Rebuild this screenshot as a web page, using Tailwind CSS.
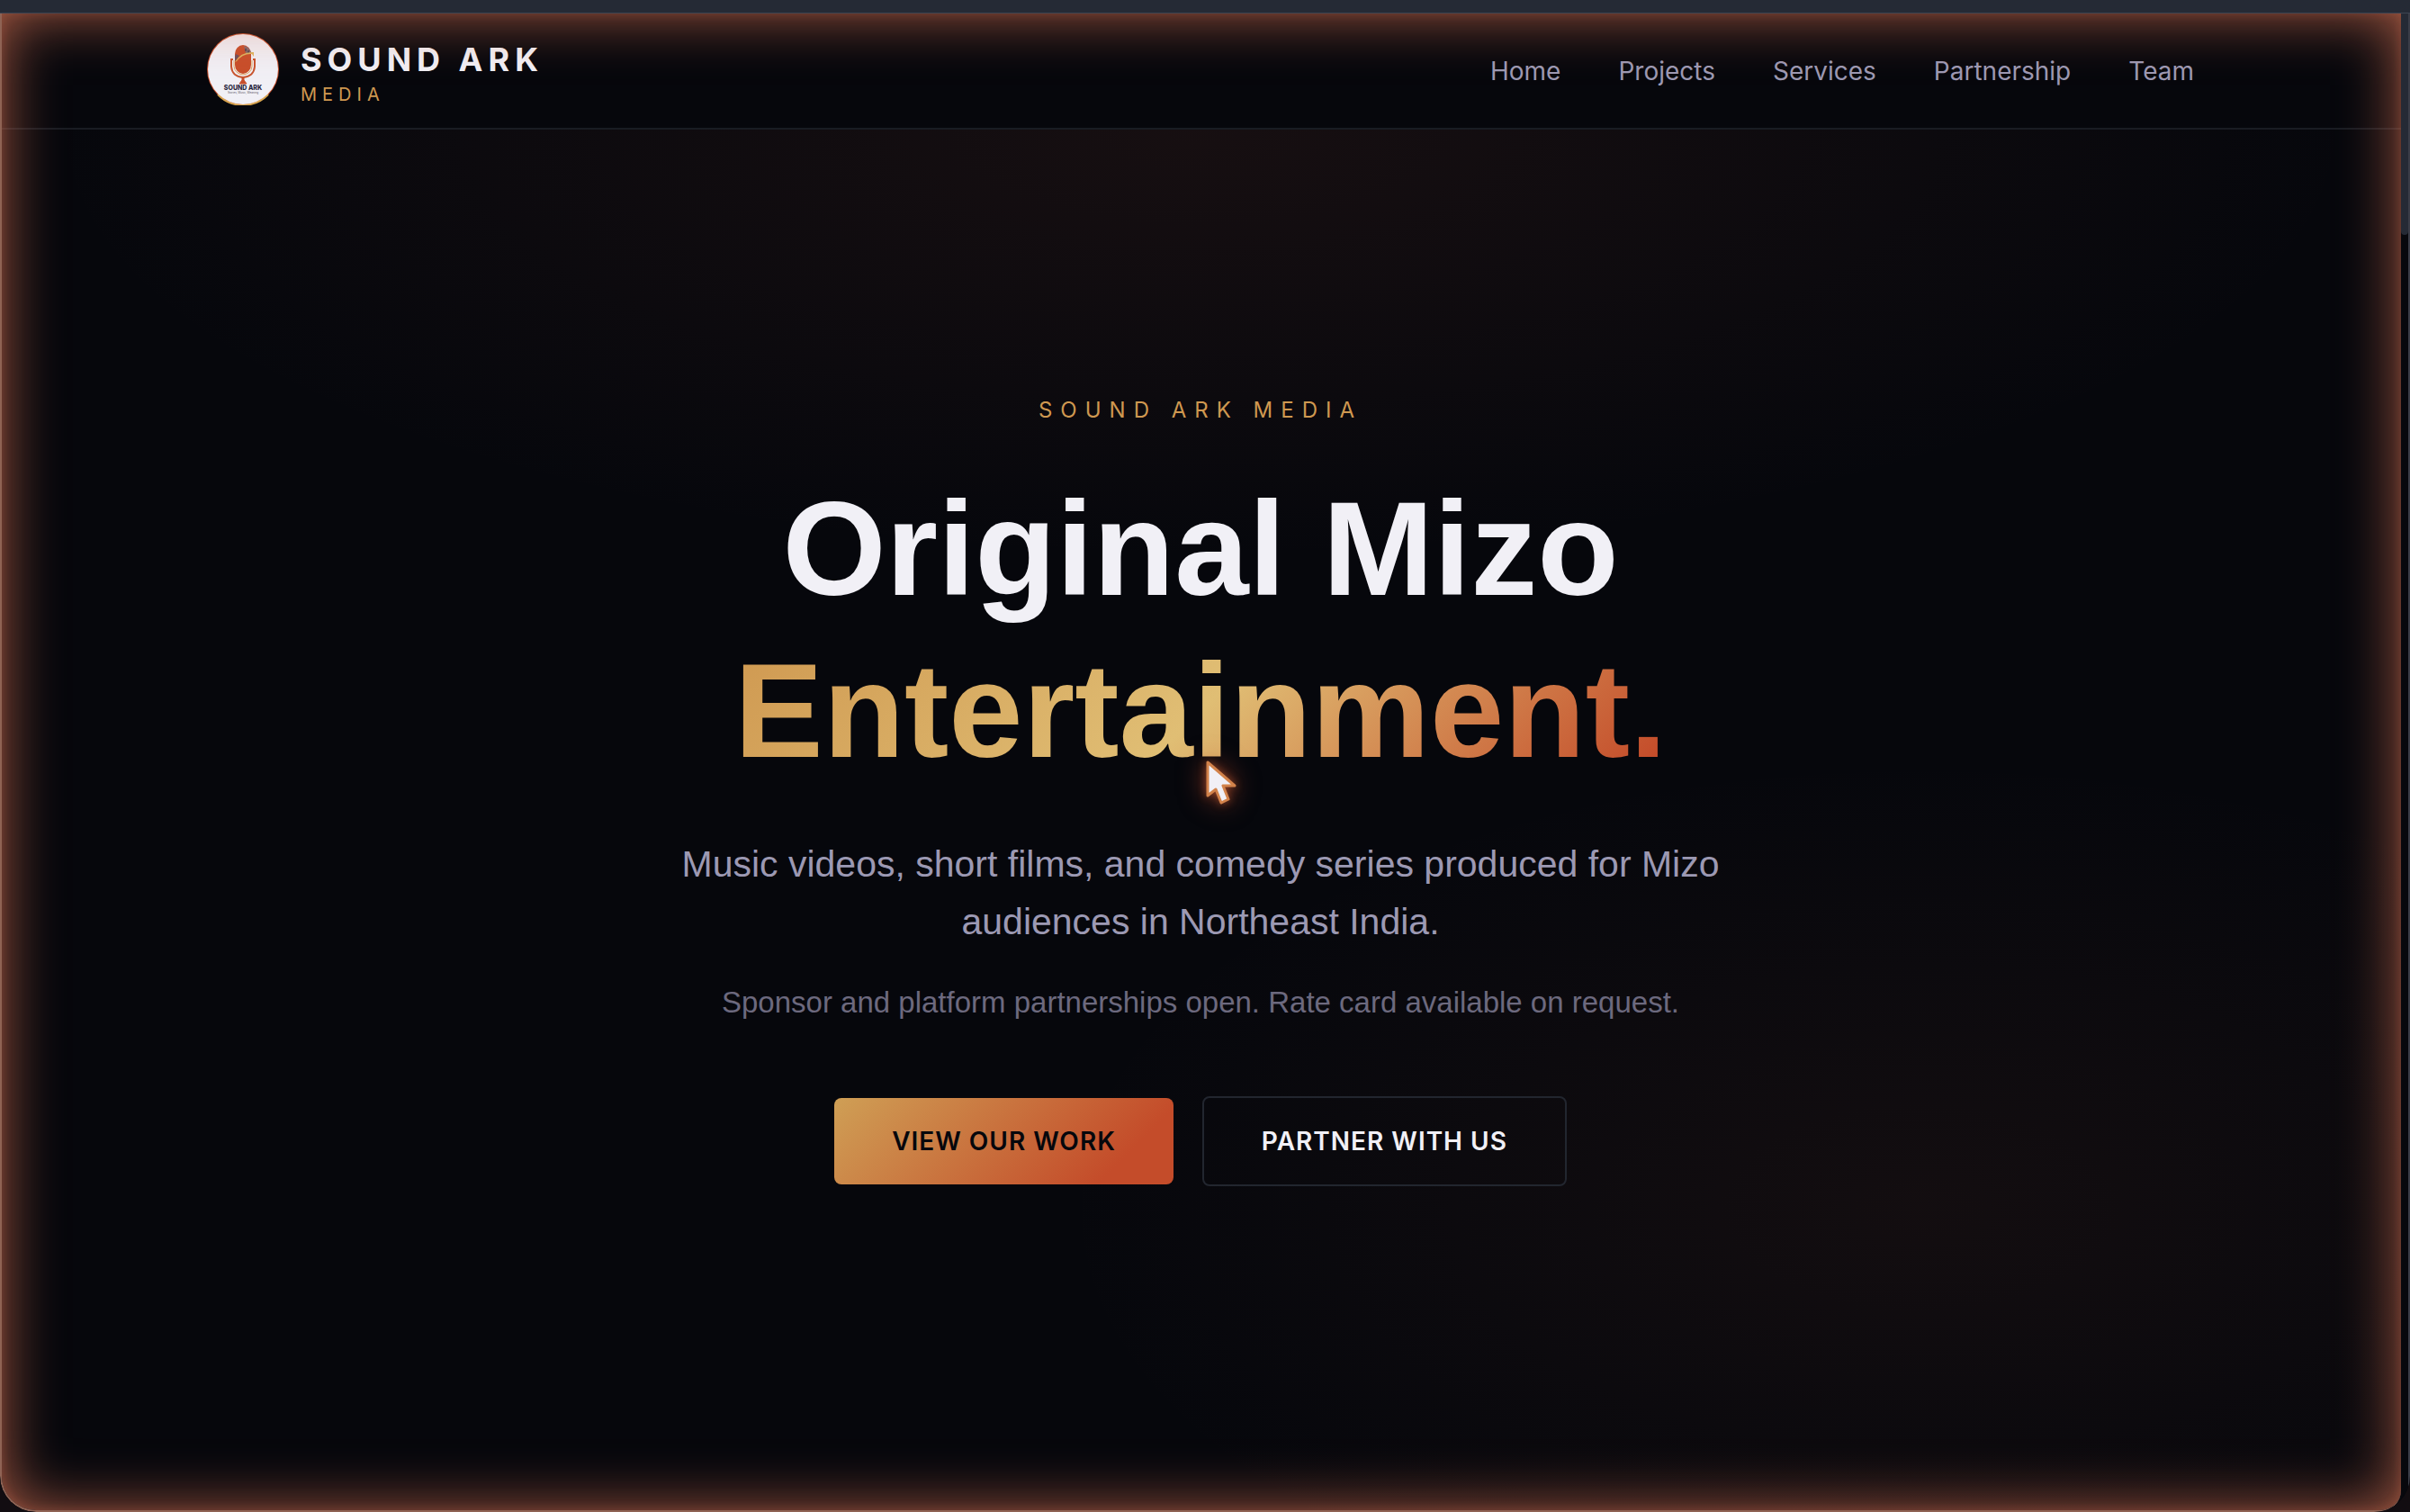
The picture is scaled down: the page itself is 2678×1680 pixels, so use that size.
<!DOCTYPE html>
<html lang="en">
<head>
  <meta charset="UTF-8">
  <meta name="viewport" content="width=device-width, initial-scale=1.0">
  <title>Sound Ark Media</title>
  <script src="https://cdn.jsdelivr.net/npm/@tailwindcss/browser@4"></script>
  <style>
    body {
      background-color: #120d11;
      font-family: 'Inter', 'Liberation Sans', sans-serif;
    }
    .hero-glow {
      background-image:
        radial-gradient(ellipse 1400px 520px at 50% 0%, rgba(190, 95, 70, 0.09), transparent 92%),
        radial-gradient(ellipse 1000px 520px at 80% 78%, rgba(190, 100, 70, 0.07), transparent 96%);
    }
    .edge-glow {
      box-shadow: inset 0 0 12px rgba(200, 105, 80, 0.3), inset 0 0 66px rgba(210, 112, 82, 0.8);
    }
    .cursor-glow {
      filter: drop-shadow(0 0 5px rgba(205, 95, 50, 0.6)) drop-shadow(0 0 14px rgba(196, 75, 42, 0.6));
    }
  </style>
</head>
<body class="min-h-screen flex flex-col">

  <!-- browser window -->
  <div class="relative grow flex flex-col overflow-hidden rounded-b-[40px] bg-[#06070c]">
    <div class="h-[15px] shrink-0 bg-[#252a35] border-b border-[#3d4452]"></div>

    <div class="grow flex">
      <div class="grow flex flex-col">

        <header class="h-[129px] px-12 pb-[3px] bg-[#06070c] border-b-2 border-[#191c23]">
          <div class="max-w-[2208px] h-full mx-auto flex items-center justify-between">
            <a href="#" class="flex items-center gap-6">
              <svg class="size-20" viewBox="0 0 80 80">
                <circle cx="40" cy="40" r="40" fill="#c8502c"/>
                <path d="M12 68a39 39 0 0 0 56 0" fill="none" stroke="#d9a650" stroke-width="2"/>
                <circle cx="40" cy="40" r="39" fill="#f1f0f6"/>
                <path d="M31 23a9 10 0 0 1 18 0v12a9 10 0 0 1-18 0z" fill="#c84e2a"/>
                <path d="M41 14q8 2 8 9l-6-1z" fill="#86686c"/>
                <path d="M31 26v5l5-6-4-2z" fill="#70505a"/>
                <path d="M43 17v3M46 19v3" stroke="#332d40" stroke-width="1"/>
                <path d="M31 32q7-12 21-11v5l-2-3q-10-1-17 8z" fill="#ddb460"/>
                <path d="M29 29h-2v8q1 11 13 12 12-1 13-12v-8h-2" fill="none" stroke="#c8552f" stroke-width="2"/>
                <path d="M30 30v7q1 8 10 9 9-1 10-9v-7" fill="none" stroke="#dfa55d" stroke-width="1"/>
                <path d="M39 49h2v3l3 4H36l3-4z" fill="#c84e2a" stroke="#c84e2a"/>
                <text x="40" y="63" text-anchor="middle" font-size="7" font-weight="800" fill="#28243c">SOUND ARK</text>
                <text x="40" y="67" text-anchor="middle" font-size="3" fill="#5d5868">Stories, Music, Meaning</text>
              </svg>
              <span class="flex flex-col pt-3">
                <span class="text-[36px] leading-[44px] font-bold tracking-[6px] text-[#f1f0f6]">SOUND ARK</span>
                <span class="text-[20px] leading-[34px] tracking-[6px] text-[#cf9850]">MEDIA</span>
              </span>
            </a>
            <nav class="flex items-center gap-16 pt-1 text-[28px] leading-10 text-[#9c99b3]">
              <a href="#home">Home</a>
              <a href="#projects">Projects</a>
              <a href="#services">Services</a>
              <a href="#partnership">Partnership</a>
              <a href="#team">Team</a>
            </nav>
          </div>
        </header>

        <main class="hero-glow grow flex flex-col items-center px-12 pt-[296px] text-center">
          <p class="text-[24px] leading-8 tracking-[9px] text-[#cf9850]">SOUND ARK MEDIA</p>
          <h1 class="mt-12 font-['Liberation_Sans'] text-[148px] leading-[180px] font-bold text-[#f1f0f6]">
            Original Mizo<br>
            <span class="inline-block bg-[linear-gradient(135deg,#cf9850_0%,#e0be74_50%,#c44c2a_96%)] bg-clip-text text-transparent">Entertainment.</span>
          </h1>
          <p class="mt-12 max-w-[1200px] font-['Liberation_Sans'] text-[41px] leading-16 text-[#9c99b3]">Music videos, short films, and comedy series produced for Mizo audiences in Northeast India.</p>
          <p class="mt-8 font-['Liberation_Sans'] text-[33px] leading-[52px] text-[#6c697e]">Sponsor and platform partnerships open. Rate card available on request.</p>
          <div class="mt-[78px] flex items-center gap-8 text-[28px] leading-10 font-semibold tracking-[1px]">
            <a href="#projects" class="px-16 py-7 rounded-lg bg-[linear-gradient(135deg,#cf9f55_0%,#c44c2a_82%)] text-[#06070c]">VIEW OUR WORK</a>
            <a href="#partnership" class="px-16 py-7 rounded-lg border-2 border-[#22262f] text-[#f1f0f6]">PARTNER WITH US</a>
          </div>
        </main>
      </div>

      <!-- scrollbar -->
      <div class="w-[10px] shrink-0 bg-[#07080d] border-r-2 border-[#3b3d48]">
        <div class="h-[246px] rounded-b bg-[#252a35]"></div>
      </div>
    </div>

    <!-- glowing frame -->
    <div class="edge-glow absolute top-[15px] right-[10px] bottom-0 left-0 rounded-bl-[40px] rounded-br-[24px] border-l-2 border-b-2 border-[#8f6354] pointer-events-none"></div>
  </div>

  <svg class="cursor-glow absolute left-1/2 top-[843px] w-9 h-[54px] overflow-visible pointer-events-none" viewBox="0 0 36 54">
    <path d="M3 4v37l9-7 6 15 8-4-6-15h13z" fill="#f1f0f6" stroke="#d2824a" stroke-width="3" stroke-linejoin="round"/>
  </svg>

</body>
</html>
